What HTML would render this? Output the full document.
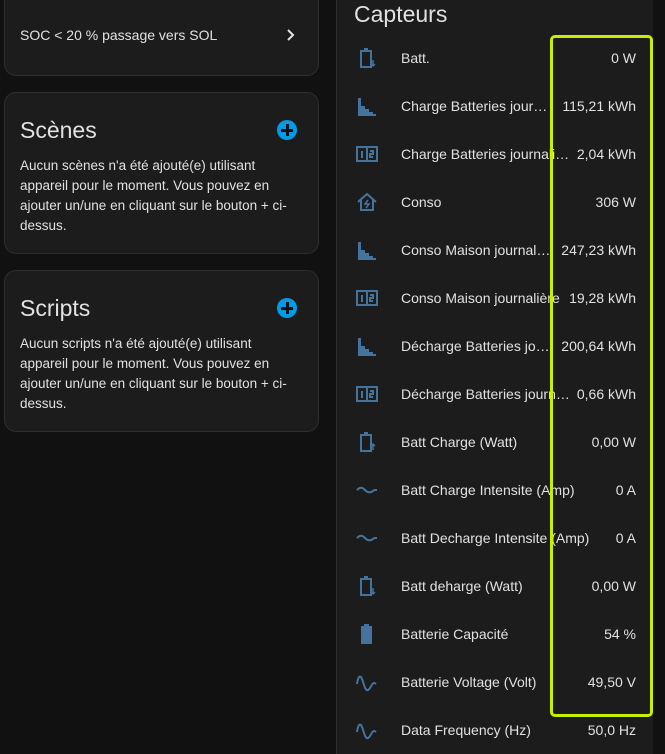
<!DOCTYPE html>
<html><head><meta charset="utf-8"><style>
*{box-sizing:border-box;margin:0;padding:0}
html,body{width:665px;height:754px;overflow:hidden}
body{background:#111111;font-family:"Liberation Sans",sans-serif;color:#e1e1e1;position:relative}
.card{position:absolute;background:#1c1c1c;border:1px solid #2e2e2e;border-radius:12px}
.h{font-size:23px;color:#e1e1e1;position:absolute;left:15px}
.p{position:absolute;left:15px;right:16px;font-size:13.5px;line-height:20px;color:#e1e1e1}
.plus{position:absolute;width:20px;height:20px;border-radius:50%;background:#039be5;right:21px}
.plus:before,.plus:after{content:"";position:absolute;background:#111;left:4px;top:8.5px;width:12px;height:3px}
.plus:after{left:8.5px;top:4px;width:3px;height:12px}
.row{position:absolute;left:0;right:0;height:48px}
.row .l{position:absolute;left:64px;top:50%;transform:translateY(-50%);font-size:14px;white-space:nowrap;overflow:hidden;text-overflow:ellipsis}
.row .v{position:absolute;right:17px;top:50%;transform:translateY(-50%);font-size:14px}
.row svg{position:absolute;left:18px;top:12px}
</style></head><body>
<div class="card" style="left:4px;top:-12px;width:315px;height:88px">
<div style="position:absolute;left:15px;top:38px;font-size:14px">SOC &lt; 20 % passage vers SOL</div>
<svg style="position:absolute;left:280px;top:38px" width="12" height="16" viewBox="0 0 12 16"><path d="M3 3l5 5-5 5" stroke="#e1e1e1" stroke-width="2" fill="none"/></svg>
</div>
<div class="card" style="left:4px;top:92px;width:315px;height:162px">
<div class="h" style="top:24px">Scènes</div><div class="plus" style="top:27px"></div>
<div class="p" style="top:63px">Aucun scènes n'a été ajouté(e) utilisant appareil pour le moment. Vous pouvez en ajouter un/une en cliquant sur le bouton + ci-dessus.</div>
</div>
<div class="card" style="left:4px;top:270px;width:315px;height:162px">
<div class="h" style="top:24px">Scripts</div><div class="plus" style="top:27px"></div>
<div class="p" style="top:63px">Aucun scripts n'a été ajouté(e) utilisant appareil pour le moment. Vous pouvez en ajouter un/une en cliquant sur le bouton + ci-dessus.</div>
</div>
<div style="position:absolute;left:336px;top:-12px;width:317px;height:766px;background:#1c1c1c;border-left:1px solid #2e2e2e">
<div style="position:absolute;left:17px;top:13px;font-size:23px">Capteurs</div>
<div style="position:absolute;left:0;right:0;top:46px">
<div class="row" style="top:0"><svg width="24" height="24" viewBox="0 0 24 24" fill="none" stroke="#44739e" stroke-width="2"><path d="M9 3h4M6 5h10v16H6z"/><path d="M18 14v6M16 18l2 2 2-2" stroke-width="1.5"/></svg><div class="l">Batt.</div><div class="v">0 W</div></div>
<div class="row" style="top:48px"><svg width="24" height="24" viewBox="0 0 24 24" fill="#44739e"><path d="M3 4h3v8h4v3h4v3h4v2h3v2H3z"/></svg><div class="l" style="max-width:152px">Charge Batteries journalière</div><div class="v">115,21 kWh</div></div>
<div class="row" style="top:96px"><svg width="24" height="24" viewBox="0 0 24 24" fill="none" stroke="#44739e" stroke-width="2"><rect x="2" y="5" width="20" height="14"/><path d="M12 5v14M7 9v7M15 9h3v3h-3v3h3"/></svg><div class="l" style="max-width:170px">Charge Batteries journalière</div><div class="v">2,04 kWh</div></div>
<div class="row" style="top:144px"><svg width="24" height="24" viewBox="0 0 24 24" fill="none" stroke="#44739e" stroke-width="2"><path d="M3 12l9-8 9 8M6 10v10h12V10"/><path d="M13 10l-3 4h4l-3 4" stroke-width="1.5"/></svg><div class="l">Conso</div><div class="v">306 W</div></div>
<div class="row" style="top:192px"><svg width="24" height="24" viewBox="0 0 24 24" fill="#44739e"><path d="M3 4h3v8h4v3h4v3h4v2h3v2H3z"/></svg><div class="l" style="max-width:150px">Conso Maison journalière</div><div class="v">247,23 kWh</div></div>
<div class="row" style="top:240px"><svg width="24" height="24" viewBox="0 0 24 24" fill="none" stroke="#44739e" stroke-width="2"><rect x="2" y="5" width="20" height="14"/><path d="M12 5v14M7 9v7M15 9h3v3h-3v3h3"/></svg><div class="l" style="max-width:160px">Conso Maison journalière</div><div class="v">19,28 kWh</div></div>
<div class="row" style="top:288px"><svg width="24" height="24" viewBox="0 0 24 24" fill="#44739e"><path d="M3 4h3v8h4v3h4v3h4v2h3v2H3z"/></svg><div class="l" style="max-width:150px">Décharge Batteries journalière</div><div class="v">200,64 kWh</div></div>
<div class="row" style="top:336px"><svg width="24" height="24" viewBox="0 0 24 24" fill="none" stroke="#44739e" stroke-width="2"><rect x="2" y="5" width="20" height="14"/><path d="M12 5v14M7 9v7M15 9h3v3h-3v3h3"/></svg><div class="l" style="max-width:173px">Décharge Batteries journalière</div><div class="v">0,66 kWh</div></div>
<div class="row" style="top:384px"><svg width="24" height="24" viewBox="0 0 24 24" fill="none" stroke="#44739e" stroke-width="2"><path d="M9 3h4M6 5h10v16H6z"/><path d="M18 20v-6M16 16l2-2 2 2" stroke-width="1.5"/></svg><div class="l">Batt Charge (Watt)</div><div class="v">0,00 W</div></div>
<div class="row" style="top:432px"><svg width="24" height="24" viewBox="0 0 24 24" fill="none" stroke="#44739e" stroke-width="2"><path d="M2 12c3-3 5-3 8 0s6 3 9 0M19 12h3"/></svg><div class="l">Batt Charge Intensite (Amp)</div><div class="v">0 A</div></div>
<div class="row" style="top:480px"><svg width="24" height="24" viewBox="0 0 24 24" fill="none" stroke="#44739e" stroke-width="2"><path d="M2 12c3-3 5-3 8 0s6 3 9 0M19 12h3"/></svg><div class="l">Batt Decharge Intensite (Amp)</div><div class="v">0 A</div></div>
<div class="row" style="top:528px"><svg width="24" height="24" viewBox="0 0 24 24" fill="none" stroke="#44739e" stroke-width="2"><path d="M9 3h4M6 5h10v16H6z"/><path d="M18 14v6M16 18l2 2 2-2" stroke-width="1.5"/></svg><div class="l">Batt deharge (Watt)</div><div class="v">0,00 W</div></div>
<div class="row" style="top:576px"><svg width="24" height="24" viewBox="0 0 24 24" fill="#44739e"><path d="M9 2h5v2h3v18H6V4h3z"/></svg><div class="l">Batterie Capacité</div><div class="v">54 %</div></div>
<div class="row" style="top:624px"><svg width="24" height="24" viewBox="0 0 24 24" fill="none" stroke="#44739e" stroke-width="2"><path d="M2 14c1-7 3-10 5-5s3 12 6 11 4-10 8-6"/></svg><div class="l">Batterie Voltage (Volt)</div><div class="v">49,50 V</div></div>
<div class="row" style="top:672px"><svg width="24" height="24" viewBox="0 0 24 24" fill="none" stroke="#44739e" stroke-width="2"><path d="M2 14c1-7 3-10 5-5s3 12 6 11 4-10 8-6"/></svg><div class="l">Data Frequency (Hz)</div><div class="v">50,0 Hz</div></div>
</div>
</div>
<div style="position:absolute;left:550px;top:35px;width:103px;height:682px;border:3px solid #c8ef00;border-radius:5px"></div>
</body></html>
